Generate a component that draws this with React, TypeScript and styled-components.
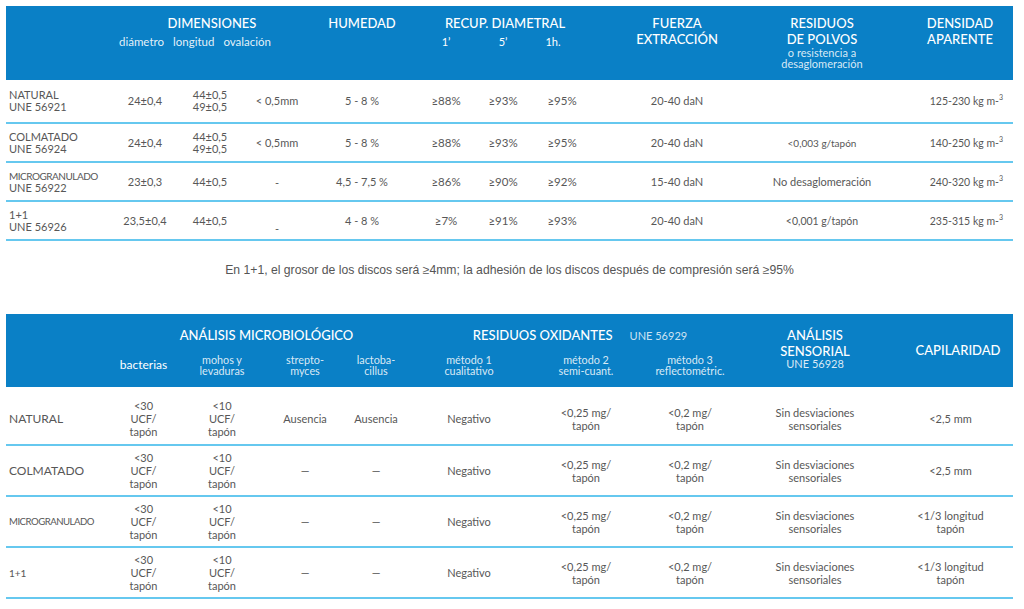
import React from "react";
import styled, { createGlobalStyle } from "styled-components";

const BLUE = "#0a80c6";
const LINE = "#66c8ef";
const TEXT = "#575757";

const Global = createGlobalStyle`
  html, body { margin: 0; padding: 0; background: #fff; }
  body { font-family: Lato, "Noto Sans", sans-serif; color: ${TEXT}; }
  #root { width: 1024px; height: 609px; }
`;

const COLS1 = "104px 70px 60px 74px 96px 72px 42px 76px 154px 136px 123px";
const COLS2 = "99px 77px 80px 86px 56px 130px 104px 104px 146px 125px";

const Page = styled.div`
  width: 1024px;
  height: 609px;
  overflow: hidden;
  box-sizing: border-box;
  padding: 6px 11px 0 6px;
  display: flex;
  flex-direction: column;
`;

const Table = styled.section`
  display: flex;
  flex-direction: column;
`;

const Head = styled.div<{ $cols: string; $h: number; $pt: number }>`
  display: grid;
  grid-template-columns: ${(p) => p.$cols};
  grid-template-rows: 16px auto;
  height: ${(p) => p.$h}px;
  padding-top: ${(p) => p.$pt}px;
  box-sizing: border-box;
  background: ${BLUE};
  color: #fff;
`;

const Title = styled.div<{ $col: string; $row?: string; $pl?: number; $mt?: number }>`
  grid-column: ${(p) => p.$col};
  grid-row: ${(p) => p.$row ?? "1"};
  align-self: start;
  margin-top: ${(p) => p.$mt ?? 0}px;
  padding-left: ${(p) => p.$pl ?? 0}px;
  text-align: center;
  font-size: 13px;
  font-weight: 500;
  line-height: 16px;
  white-space: nowrap;
`;

const TitleGroup = styled.div<{ $col: string; $pl?: number }>`
  grid-column: ${(p) => p.$col};
  grid-row: 1;
  display: flex;
  justify-content: center;
  align-items: baseline;
  gap: 17px;
  padding-left: ${(p) => p.$pl ?? 0}px;
  font-size: 13px;
  font-weight: 500;
  line-height: 16px;
  white-space: nowrap;
`;

const Small = styled.div<{ $size?: number; $lh?: number }>`
  font-size: ${(p) => p.$size ?? 11}px;
  line-height: ${(p) => p.$lh ?? 11}px;
  font-weight: 400;
  color: rgba(255, 255, 255, 0.85);
`;

const InlineSmall = styled.span`
  font-size: 11px;
  font-weight: 400;
  color: rgba(255, 255, 255, 0.8);
`;

const SubRow = styled.div<{ $col: string; $pl?: number }>`
  grid-column: ${(p) => p.$col};
  grid-row: 2;
  display: flex;
  gap: 9px;
  padding-left: ${(p) => p.$pl ?? 0}px;
  margin-top: 5px;
  font-size: 11.5px;
  line-height: 12px;
  color: rgba(255, 255, 255, 0.9);
  white-space: nowrap;
`;

const Sub = styled.div<{ $col: string; $pr?: number; $mt?: number; $size?: number; $bright?: boolean }>`
  grid-column: ${(p) => p.$col};
  grid-row: 2;
  align-self: ${(p) => (p.$mt !== undefined ? "start" : "center")};
  margin-top: ${(p) => p.$mt ?? 0}px;
  padding-right: ${(p) => p.$pr ?? 0}px;
  text-align: center;
  font-size: ${(p) => p.$size ?? 10.8}px;
  line-height: ${(p) => (p.$bright ? 12 : 11)}px;
  color: ${(p) => (p.$bright ? "#fff" : "rgba(255,255,255,0.85)")};
  white-space: nowrap;
`;

const Row = styled.div<{ $cols: string; $h: number; $pt?: number }>`
  display: grid;
  grid-template-columns: ${(p) => p.$cols};
  height: ${(p) => p.$h}px;
  padding-top: ${(p) => p.$pt ?? 0}px;
  border-bottom: 2px solid ${LINE};
  align-items: center;
`;

const Name = styled.div<{ $size?: number; $ls?: number }>`
  padding-left: 3px;
  font-size: ${(p) => p.$size ?? 11}px;
  letter-spacing: ${(p) => p.$ls ?? 0}px;
  line-height: 12px;
  white-space: nowrap;
`;

const NameSecond = styled.div`
  font-size: 11px;
  letter-spacing: 0;
`;

const Cell = styled.div<{ $size?: number; $right?: boolean; $low?: number }>`
  text-align: ${(p) => (p.$right ? "right" : "center")};
  padding-right: ${(p) => (p.$right ? 10 : 0)}px;
  padding-top: ${(p) => p.$low ?? 0}px;
  font-size: ${(p) => p.$size ?? 11}px;
  line-height: 12px;
  white-space: nowrap;
`;

const Cell2 = styled.div`
  text-align: center;
  font-size: 11px;
  line-height: 13px;
  white-space: nowrap;
`;

const Note = styled.p`
  margin: 22px 0 36px;
  height: 15px;
  text-align: center;
  font-family: "Liberation Sans", Arial, sans-serif;
  font-size: 12.2px;
  line-height: 15px;
  color: #555;
`;

const Sup = styled.sup`
  font-size: 7px;
  line-height: 0;
  vertical-align: 5px;
`;

type R1 = {
  name: string;
  std: string;
  nameSize?: number;
  ls?: number;
  diam: string;
  long: string[];
  oval: string;
  ovalLow?: number;
  hum: string;
  r: string[];
  fuerza: string;
  residuo: string;
  residuoSize?: number;
  dens: string;
};

const rows1: R1[] = [
  { name: "NATURAL", std: "UNE 56921", diam: "24±0,4", long: ["44±0,5", "49±0,5"], oval: "< 0,5mm", hum: "5 - 8 %", r: ["≥88%", "≥93%", "≥95%"], fuerza: "20-40 daN", residuo: "", dens: "125-230" },
  { name: "COLMATADO", std: "UNE 56924", diam: "24±0,4", long: ["44±0,5", "49±0,5"], oval: "< 0,5mm", hum: "5 - 8 %", r: ["≥88%", "≥93%", "≥95%"], fuerza: "20-40 daN", residuo: "<0,003 g/tapón", residuoSize: 10, dens: "140-250" },
  { name: "MICROGRANULADO", std: "UNE 56922", nameSize: 10, ls: -0.5, diam: "23±0,3", long: ["44±0,5"], oval: "-", ovalLow: 3, hum: "4,5 - 7,5 %", r: ["≥86%", "≥90%", "≥92%"], fuerza: "15-40 daN", residuo: "No desaglomeración", dens: "240-320" },
  { name: "1+1", std: "UNE 56926", diam: "23,5±0,4", long: ["44±0,5"], oval: "-", ovalLow: 16, hum: "4 - 8 %", r: ["≥7%", "≥91%", "≥93%"], fuerza: "20-40 daN", residuo: "<0,001 g/tapón", residuoSize: 10.5, dens: "235-315" },
];

type R2 = {
  name: string;
  nameSize: number;
  ls?: number;
  strep: string;
  lact: string;
  cap: string[];
};

const rows2: R2[] = [
  { name: "NATURAL", nameSize: 12, strep: "Ausencia", lact: "Ausencia", cap: ["<2,5 mm"] },
  { name: "COLMATADO", nameSize: 12, strep: "—", lact: "—", cap: ["<2,5 mm"] },
  { name: "MICROGRANULADO", nameSize: 9.6, ls: -0.5, strep: "—", lact: "—", cap: ["<1/3 longitud", "tapón"] },
  { name: "1+1", nameSize: 10, strep: "—", lact: "—", cap: ["<1/3 longitud", "tapón"] },
];

const Lines = ({ items }: { items: string[] }) => (
  <>
    {items.map((t, i) => (
      <div key={i}>{t}</div>
    ))}
  </>
);

export default function App() {
  return (
    <Page>
      <Global />
      <Table>
        <Head $cols={COLS1} $h={74} $pt={9}>
          <Title $col="2 / 5">DIMENSIONES</Title>
          <SubRow $col="2 / 5" $pl={9}>
            <span>diámetro</span>
            <span>longitud</span>
            <span>ovalación</span>
          </SubRow>
          <Title $col="5">HUMEDAD</Title>
          <Title $col="6 / 9">RECUP. DIAMETRAL</Title>
          <Sub $col="6" $mt={5} $size={11} $bright>1’</Sub>
          <Sub $col="7" $mt={5} $size={11} $bright>5’</Sub>
          <Sub $col="8" $mt={5} $size={11} $bright $pr={18}>1h.</Sub>
          <Title $col="9" $row="1 / span 2">
            FUERZA
            <br />
            EXTRACCIÓN
          </Title>
          <Title $col="10" $row="1 / span 2" $pl={0}>
            <div>RESIDUOS</div>
            <div>DE POLVOS</div>
            <Small>o resistencia a</Small>
            <Small>desaglomeración</Small>
          </Title>
          <Title $col="11" $row="1 / span 2" $pl={17}>
            DENSIDAD
            <br />
            APARENTE
          </Title>
        </Head>
        {rows1.map((r, i) => (
          <Row key={r.name} $cols={COLS1} $h={i === 0 ? 42 : 37}>
            <Name $size={r.nameSize} $ls={r.ls}>
              {r.name}
              <NameSecond>{r.std}</NameSecond>
            </Name>
            <Cell>{r.diam}</Cell>
            <Cell>
              <Lines items={r.long} />
            </Cell>
            <Cell $low={r.ovalLow}>{r.oval}</Cell>
            <Cell>{r.hum}</Cell>
            <Cell $size={11.5}>{r.r[0]}</Cell>
            <Cell $size={11.5}>{r.r[1]}</Cell>
            <Cell $size={11.5}>{r.r[2]}</Cell>
            <Cell>{r.fuerza}</Cell>
            <Cell $size={r.residuoSize}>{r.residuo}</Cell>
            <Cell $right $size={10.5}>
              {r.dens} kg m-<Sup>3</Sup>
            </Cell>
          </Row>
        ))}
      </Table>

      <Note>
        En 1+1, el grosor de los discos será ≥4mm; la adhesión de los discos después de compresión será ≥95%
      </Note>

      <Table>
        <Head $cols={COLS2} $h={73} $pt={13}>
          <Title $col="2 / 6" $pl={24}>ANÁLISIS MICROBIOLÓGICO</Title>
          <TitleGroup $col="6 / 9" $pl={14}>
            <span>RESIDUOS OXIDANTES</span>
            <InlineSmall>UNE 56929</InlineSmall>
          </TitleGroup>
          <Sub $col="2" $size={12} $bright>bacterias</Sub>
          <Sub $col="3">
            mohos y
            <br />
            levaduras
          </Sub>
          <Sub $col="4">
            strepto-
            <br />
            myces
          </Sub>
          <Sub $col="5">
            lactoba-
            <br />
            cillus
          </Sub>
          <Sub $col="6">
            método 1
            <br />
            cualitativo
          </Sub>
          <Sub $col="7">
            método 2
            <br />
            semi-cuant.
          </Sub>
          <Sub $col="8">
            método 3
            <br />
            reflectométric.
          </Sub>
          <Title $col="9" $row="1 / span 2">
            <div>ANÁLISIS</div>
            <div>SENSORIAL</div>
            <Small $lh={10}>UNE 56928</Small>
          </Title>
          <Title $col="10" $row="1 / span 2" $pl={15} $mt={15}>
            CAPILARIDAD
          </Title>
        </Head>
        {rows2.map((r, i) => (
          <Row key={r.name} $cols={COLS2} $h={i === 0 ? 51 : 49} $pt={i === 0 ? 6 : 0}>
            <Name $size={r.nameSize} $ls={r.ls}>
              {r.name}
            </Name>
            <Cell2>
              <Lines items={["<30", "UCF/", "tapón"]} />
            </Cell2>
            <Cell2>
              <Lines items={["<10", "UCF/", "tapón"]} />
            </Cell2>
            <Cell2>{r.strep}</Cell2>
            <Cell2>{r.lact}</Cell2>
            <Cell2>Negativo</Cell2>
            <Cell2>
              <Lines items={["<0,25 mg/", "tapón"]} />
            </Cell2>
            <Cell2>
              <Lines items={["<0,2 mg/", "tapón"]} />
            </Cell2>
            <Cell2>
              <Lines items={["Sin desviaciones", "sensoriales"]} />
            </Cell2>
            <Cell2>
              <Lines items={r.cap} />
            </Cell2>
          </Row>
        ))}
      </Table>
    </Page>
  );
}
